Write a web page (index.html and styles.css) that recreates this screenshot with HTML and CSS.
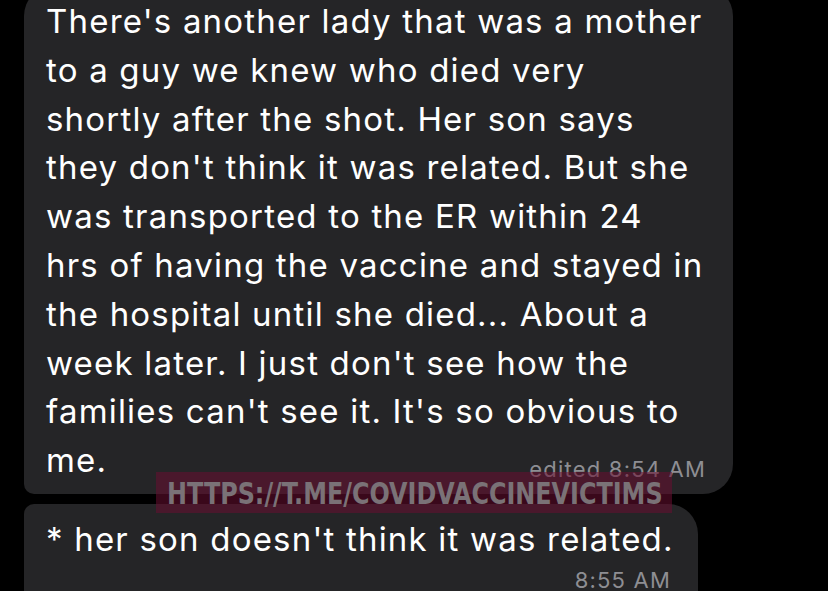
FILE: index.html
```html
<!DOCTYPE html>
<html>
<head>
<meta charset="utf-8">
<link rel="stylesheet" href="styles.css">
</head>
<body>
<div class="chat">
  <div class="bubble first">
    <p class="text">There's another lady that was a mother<br>to a guy we knew who died very<br>shortly after the shot. Her son says<br>they don't think it was related. But she<br>was transported to the ER within 24<br>hrs of having the vaccine and stayed in<br>the hospital until she died... About a<br>week later. I just don't see how the<br>families can't see it. It's so obvious to<br>me.</p>
    <div class="meta inline">edited 8:54 AM</div>
  </div>
  <div class="bubble second">
    <p class="text">* her son doesn't think it was related.</p>
    <div class="meta">8:55 AM</div>
  </div>
  <div class="watermark"><span>HTTPS://T.ME/COVIDVACCINEVICTIMS</span></div>
</div>
</body>
</html>
```
FILE: styles.css
```css
html, body {
  margin: 0;
  padding: 0;
  background: #000;
  height: 100%;
  overflow: hidden;
}
.chat {
  position: relative;
  display: flex;
  flex-direction: column;
  gap: 10px;
  padding-left: 24px;
  margin-top: -14px;
  font-family: "Inter", "Liberation Sans", sans-serif;
}
.bubble {
  background: #252527;
  color: #fff;
  box-sizing: border-box;
  padding: 11px 27px 0 22px;
}
.first {
  width: 709px;
  border-radius: 30px 30px 30px 10px;
  padding-bottom: 12px;
}
.second {
  width: 674px;
  border-radius: 10px 30px 30px 30px;
  height: 140px;
}
.text {
  margin: 0;
  font-size: 33px;
  line-height: 48.8px;
  letter-spacing: 1.2px;
  white-space: nowrap;
}
.meta {
  text-align: right;
  color: #8e8e93;
  font-size: 22px;
  line-height: 26px;
  letter-spacing: 1.2px;
  margin-top: 3px;
}
.meta.inline {
  margin-top: -29px;
}
.watermark {
  position: absolute;
  left: 156px;
  top: 486px;
  width: 516px;
  height: 41px;
  background: rgba(105, 15, 50, 0.55);
  display: flex;
  align-items: center;
  padding-left: 11px;
  box-sizing: border-box;
  overflow: hidden;
}
.watermark span {
  font-family: "DejaVu Sans Condensed", "DejaVu Sans", sans-serif;
  font-weight: bold;
  font-size: 31px;
  color: #7a7277;
  transform: scaleX(0.856);
  transform-origin: left center;
  white-space: nowrap;
}
```
